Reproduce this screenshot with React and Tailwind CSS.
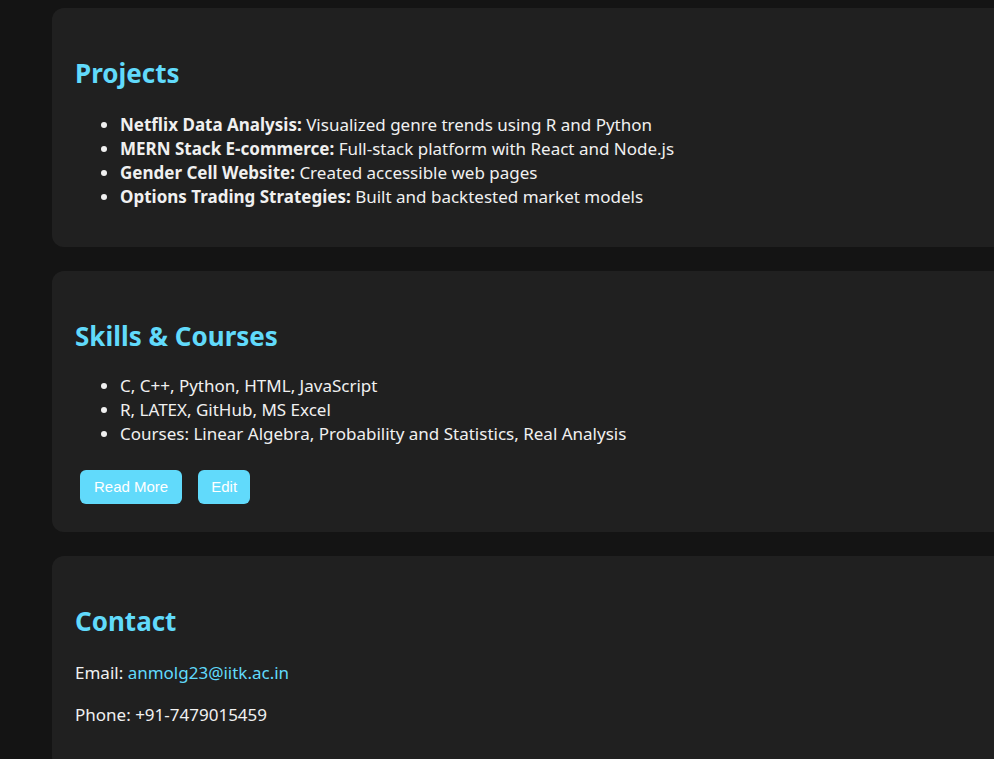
import React from "react";

const projects = [
    ["Netflix Data Analysis:", "Visualized genre trends using R and Python"],
    ["MERN Stack E-commerce:", "Full-stack platform with React and Node.js"],
    ["Gender Cell Website:", "Created accessible web pages"],
    ["Options Trading Strategies:", "Built and backtested market models"],
];

const skills = [
    "C, C++, Python, HTML, JavaScript",
    "R, LATEX, GitHub, MS Excel",
    "Courses: Linear Algebra, Probability and Statistics, Real Analysis",
];

function Card({ title, children }) {
    return (
        <section className="bg-[#202020] rounded-xl ml-[52px] mr-[-40px] px-[23px] pt-[22px] pb-6">
            <h2 className="text-[26px] font-bold text-[#61dafb] leading-[36px] mt-[25px] mb-[22px]">{title}</h2>
            {children}
        </section>
    );
}

export default function App() {
    return (
        <div className="min-h-screen bg-[#141414] overflow-hidden text-[#f0f0f0] text-[17px] leading-6 pt-2 pb-10 font-['Noto_Sans',sans-serif]">
            <div className="flex flex-col gap-6">
                <Card title="Projects">
                    <ul className="list-disc pl-[45px] mb-[14px]">
                        {projects.map(([b, t]) => (
                            <li key={b}><strong className="font-bold">{b}</strong> {t}</li>
                        ))}
                    </ul>
                </Card>

                <Card title="Skills & Courses">
                    <ul className="list-disc pl-[45px] -mt-[2px] mb-6">
                        {skills.map((s) => <li key={s}>{s}</li>)}
                    </ul>
                    <div className="flex gap-4 ml-[5px] mb-1">
                        <button className="bg-[#61dafb] text-white font-['Liberation_Sans',sans-serif] text-[15px] rounded-md px-[14px] h-[34px]">Read More</button>
                        <button className="bg-[#61dafb] text-white font-['Liberation_Sans',sans-serif] text-[15px] rounded-md px-[13px] h-[34px]">Edit</button>
                    </div>
                </Card>

                <Card title="Contact">
                    <p className="my-[18px]">Email: <a href="#" className="text-[#61dafb]">anmolg23@iitk.ac.in</a></p>
                    <p className="my-[18px]">Phone: +91-7479015459</p>
                </Card>
            </div>
        </div>
    );
}
